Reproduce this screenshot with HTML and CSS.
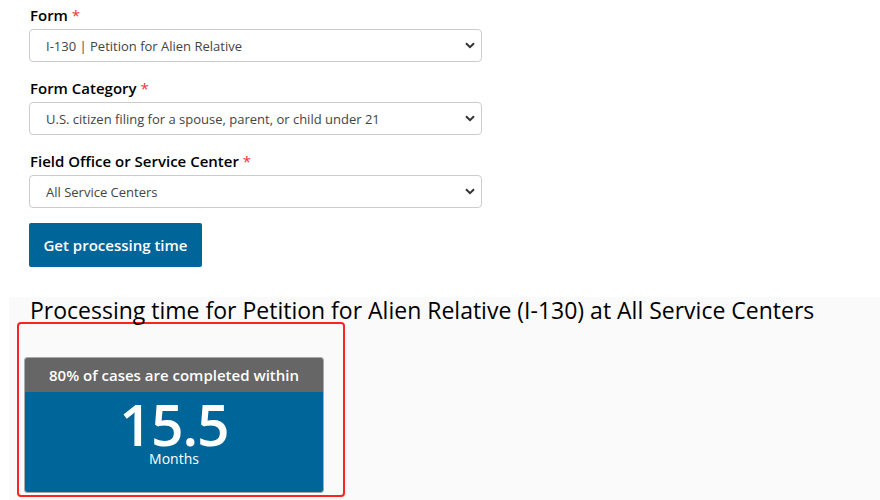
FILE: index.html
```html
<!DOCTYPE html>
<html lang="en">
<head>
    <meta charset="UTF-8">
    <meta name="viewport" content="width=device-width, initial-scale=1.0">
    <title>Processing Times</title>
    <link rel="stylesheet" href="styles.css">
</head>
<body>

    <!-- Search form -->
    <form class="search-form">
        <div class="field">
            <label for="form">Form <span class="req">*</span></label>
            <select id="form">
                <option>I-130 | Petition for Alien Relative</option>
            </select>
        </div>
        <div class="field">
            <label for="category">Form Category <span class="req">*</span></label>
            <select id="category">
                <option>U.S. citizen filing for a spouse, parent, or child under 21</option>
            </select>
        </div>
        <div class="field">
            <label for="office">Field Office or Service Center <span class="req">*</span></label>
            <select id="office">
                <option>All Service Centers</option>
            </select>
        </div>
        <button type="button" class="btn">Get processing time</button>
    </form>

    <!-- Result -->
    <section class="result">
        <h2>Processing time for Petition for Alien Relative (I-130) at All Service Centers</h2>
        <div class="highlight">
            <div class="time-card">
                <div class="time-head">80% of cases are completed within</div>
                <div class="time-body">
                    <div class="time-num">15.5</div>
                    <div class="time-unit">Months</div>
                </div>
            </div>
        </div>
    </section>

</body>
</html>
```

FILE: styles.css
```css
body {
    font-family: "Open Sans", Arial, sans-serif;
    margin: 0;
    padding: 0;
    background-color: #fff;
    color: #000;
    overflow: hidden;
}

/* Form */
.search-form {
    padding: 6px 0 0 29px;
    width: 453px;
}

.field {
    margin-bottom: 17px;
}

.field label {
    display: block;
    font-size: 15px;
    font-weight: 600;
    margin: 0 0 5px 1px;
    line-height: 18px;
}

.req {
    color: #e33;
    font-weight: normal;
}

.field select {
    width: 453px;
    height: 33px;
    padding: 0 36px 0 16px;
    font-family: inherit;
    font-size: 13px;
    color: #444;
    background: #fff url("data:image/svg+xml,%3Csvg xmlns='http://www.w3.org/2000/svg' width='10' height='7' viewBox='0 0 10 7'%3E%3Cpath d='M1 1.2l4 4 4-4' fill='none' stroke='%23333' stroke-width='2'/%3E%3C/svg%3E") no-repeat right 6px center;
    border: 1px solid #ccc;
    border-radius: 4px;
    appearance: none;
    -webkit-appearance: none;
}

.btn {
    margin-top: -2px;
    width: 173px;
    height: 44px;
    background-color: #006699;
    color: #fff;
    border: none;
    border-radius: 2px;
    font-family: inherit;
    font-size: 15px;
    font-weight: 600;
}

/* Result */
.result {
    margin: 30px 0 0 9px;
    background-color: #fafafa;
    padding: 1px 0 0;
    height: 220px;
}

.result h2 {
    font-size: 23px;
    font-weight: normal;
    margin: 1px 0 0 21px;
    line-height: 23px;
}

.highlight {
    width: 300px;
    margin: 0 0 0 8px;
    padding: 33px 19px 2px 5px;
    border: 2px solid #f22;
    border-radius: 4px;
}

.time-card {
    border-radius: 3px;
    overflow: hidden;
    border: 1px solid #aaa;
    text-align: center;
    color: #fff;
}

.time-head {
    background-color: #666;
    height: 34px;
    line-height: 34px;
    font-size: 15px;
    font-weight: 600;
}

.time-body {
    background-color: #006699;
    height: 100px;
}

.time-num {
    font-size: 57px;
    font-weight: 600;
    line-height: 52px;
    padding-top: 6px;
    letter-spacing: -1px;
}

.time-unit {
    font-size: 14px;
    line-height: 18px;
    margin-top: 0;
}
```
